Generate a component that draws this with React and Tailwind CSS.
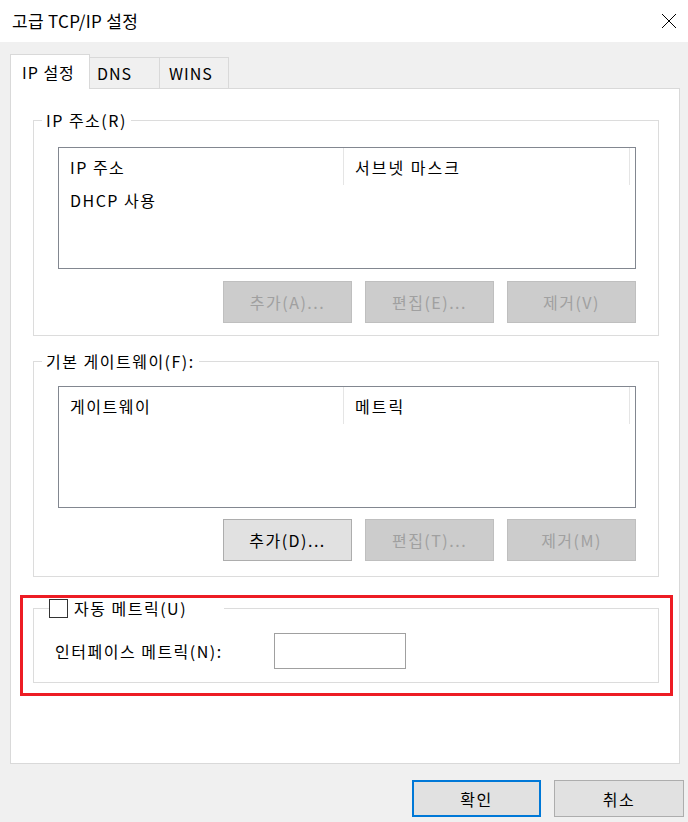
export default function App() {
  const Btn = ({ children, disabled }) => (
    <div
      className={
        "w-[129px] h-[42px] flex items-center justify-center border text-[16px] " +
        (disabled
          ? "bg-[#cccccc] border-[#bfbfbf] text-[#a0a0a0]"
          : "bg-[#e1e1e1] border-[#adadad] text-black")
      }
    >
      {children}
    </div>
  );

  const ListBox = ({ c1, c2, rows }) => (
    <div className="h-[122px] border border-[#828790] bg-white flex flex-col">
      <div className="flex h-[37px]">
        <div className="w-[285px] pl-[11px] flex items-center border-r border-[#e5e5e5]">{c1}</div>
        <div className="w-[286px] pl-[11px] flex items-center border-r border-[#e5e5e5] tracking-[2px]">{c2}</div>
      </div>
      {rows.map((r) => (
        <div key={r} className="pl-[11px] h-[30px] flex items-center">{r}</div>
      ))}
    </div>
  );

  return (
    <div className="w-[688px] h-[822px] bg-[#f0f0f0] flex flex-col overflow-hidden text-[16px] leading-[20px] tracking-[1.5px] text-black font-['Noto_Sans_CJK_KR','Noto_Sans',sans-serif]">
      {/* Title bar */}
      <div className="h-[42px] bg-white flex items-center justify-between pl-[12px] pr-[11px] shrink-0">
        <span className="text-[17px] tracking-[0.3px]">고급 TCP/IP 설정</span>
        <svg width="16" height="16" viewBox="0 0 16 16">
          <path d="M1 1 L15 15 M15 1 L1 15" stroke="#000" strokeWidth="1" fill="none" />
        </svg>
      </div>

      <div className="flex flex-col pl-[10px] pt-[12px]">
        {/* Tabs */}
        <div className="flex items-end h-[35px] -mb-px relative z-10">
          <div className="w-[80px] h-[35px] bg-white border border-b-0 border-[#d9d9d9] pl-[11px] flex items-center pb-[1px] tracking-[1px]">
            IP 설정
          </div>
          <div className="w-[70px] h-[32px] bg-[#f0f0f0] border border-l-0 border-[#d9d9d9] pl-[7px] flex items-center tracking-[1px]">
            DNS
          </div>
          <div className="w-[69px] h-[32px] bg-[#f0f0f0] border border-l-0 border-[#d9d9d9] pl-[9px] flex items-center tracking-[1px]">
            WINS
          </div>
        </div>

        {/* Panel */}
        <div className="w-[670px] h-[676px] bg-white border border-[#d9d9d9] pl-[22px] pr-[20px] pt-[21px] flex flex-col">
          <fieldset className="border border-[#dcdcdc] p-0 m-0">
            <legend className="ml-[8px] px-[4px] leading-[20px]">IP 주소(R)</legend>
            <div className="pl-[24px] pr-[22px] pt-[17px] pb-[12px]">
              <ListBox c1="IP 주소" c2="서브넷 마스크" rows={["DHCP 사용"]} />
              <div className="flex justify-end gap-[13px] mt-[12px]">
                <Btn disabled>추가(A)...</Btn>
                <Btn disabled>편집(E)...</Btn>
                <Btn disabled>제거(V)</Btn>
              </div>
            </div>
          </fieldset>

          <fieldset className="border border-[#dcdcdc] p-0 m-0 mt-[15px]">
            <legend className="ml-[8px] px-[4px] leading-[20px]">기본 게이트웨이(F):</legend>
            <div className="pl-[24px] pr-[22px] pt-[15px] pb-[15px]">
              <ListBox c1="게이트웨이" c2="메트릭" rows={[]} />
              <div className="flex justify-end gap-[13px] mt-[11px]">
                <Btn>추가(D)...</Btn>
                <Btn disabled>편집(T)...</Btn>
                <Btn disabled>제거(M)</Btn>
              </div>
            </div>
          </fieldset>

          <div className="mt-[18px] -ml-[13px] -mr-[14px] border-[3px] border-[#ed1c24] pl-[10px] pr-[11px] pb-[10px]">
            <fieldset className="border border-[#dcdcdc] p-0 m-0">
              <legend className="ml-[15px] w-[175px] leading-[20px] flex items-center">
                <span className="w-[19px] h-[19px] border border-[#333333] bg-white inline-block" />
                <span className="ml-[6px]">자동 메트릭(U)</span>
              </legend>
              <div className="pl-[21px] pt-[15px] pb-[13px] flex items-center">
                <span className="w-[219px]">인터페이스 메트릭(N):</span>
                <div className="w-[132px] h-[36px] border border-[#a0a0a0] bg-white" />
              </div>
            </fieldset>
          </div>
        </div>
      </div>

      {/* Bottom buttons */}
      <div className="flex justify-end gap-[13px] pr-[4px] mt-[16px]">
        <div className="w-[129px] h-[37px] bg-[#e1e1e1] border-2 border-[#0078d7] flex items-center justify-center">
          확인
        </div>
        <div className="w-[130px] h-[37px] bg-[#e1e1e1] border border-[#adadad] flex items-center justify-center">
          취소
        </div>
      </div>
    </div>
  );
}
